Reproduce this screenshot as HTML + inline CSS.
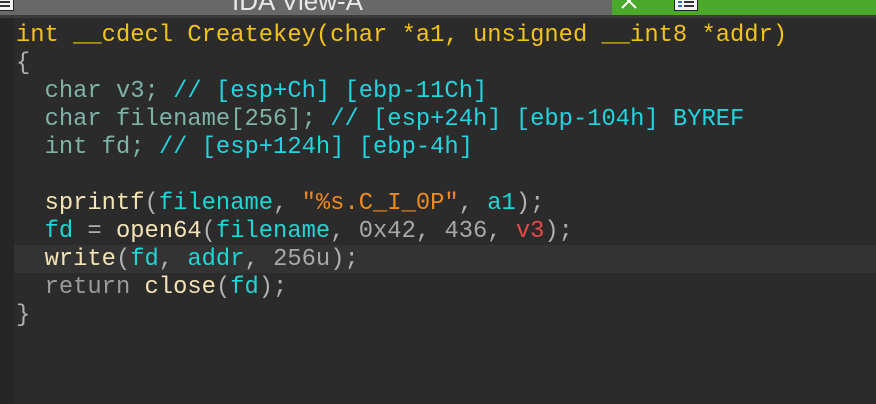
<!DOCTYPE html>
<html><head><meta charset="utf-8"><style>
html,body{margin:0;padding:0;width:876px;height:404px;overflow:hidden;background:#2b2b2b;}
.bar{position:absolute;left:0;top:0;width:612px;height:15px;background:#686868;overflow:hidden;}
.green{position:absolute;left:612px;top:0;width:264px;height:15px;background:#4aa82a;overflow:hidden;}
.sep{position:absolute;left:0;top:15px;width:876px;height:3px;background:#3a3a3a;}
.margin{position:absolute;left:0;top:18px;width:14px;height:386px;background:#262626;}
.hl{position:absolute;left:14px;top:245px;width:862px;height:28px;background:#333333;}
.title{position:absolute;left:232px;top:-14px;font:26px "Liberation Sans",sans-serif;color:#e8e8e8;}
.icon{position:absolute;top:-4px;width:22px;height:13px;background:#f2f2f2;border:1px solid #222;}
.icon i{position:absolute;left:3px;height:2px;width:4px;background:#2a6fc0;}
.icon b{position:absolute;left:9px;height:2px;width:10px;background:#333;}
pre{position:absolute;left:16px;top:22px;margin:0;font:23.8px/28px "Liberation Mono",monospace;color:#b0b0b0;}
.y{color:#f2c31a}.d{color:#7fb3a8}.c{color:#22d4e0}.f{color:#f3e3b5}.v{color:#1fd6d6}.s{color:#f08a1c}.n{color:#a8a8a8}.r{color:#e84848}.k{color:#9a9a9a}
</style></head><body>
<div class="bar"><div class="title">IDA View-A</div>
<div class="icon" style="left:-10px"><i style="top:4px"></i><b style="top:4px"></b><i style="top:8px"></i><b style="top:8px"></b></div></div>
<div class="green"><svg style="position:absolute;left:8px;top:0" width="20" height="12"><path d="M2 -6 L16 8 M16 -6 L2 8" stroke="#fff" stroke-width="2"/></svg>
<div class="icon" style="left:62px"><i style="top:4px"></i><b style="top:4px"></b><i style="top:8px"></i><b style="top:8px"></b></div></div>
<div class="sep"></div>
<div class="margin"></div>
<div class="hl"></div>
<pre><span class="y">int __cdecl Createkey(char *a1, unsigned __int8 *addr)</span>
{
  <span class="d">char v3;</span> <span class="c">// [esp+Ch] [ebp-11Ch]</span>
  <span class="d">char filename[256];</span> <span class="c">// [esp+24h] [ebp-104h] BYREF</span>
  <span class="d">int fd;</span> <span class="c">// [esp+124h] [ebp-4h]</span>

  <span class="f">sprintf</span>(<span class="v">filename</span>, <span class="s">"%s.C_I_0P"</span>, <span class="v">a1</span>);
  <span class="v">fd</span> = <span class="f">open64</span>(<span class="v">filename</span>, <span class="n">0x42</span>, <span class="n">436</span>, <span class="r">v3</span>);
  <span class="f">write</span>(<span class="v">fd</span>, <span class="v">addr</span>, <span class="n">256u</span>);
  <span class="k">return</span> <span class="f">close</span>(<span class="v">fd</span>);
}</pre>
</body></html>
